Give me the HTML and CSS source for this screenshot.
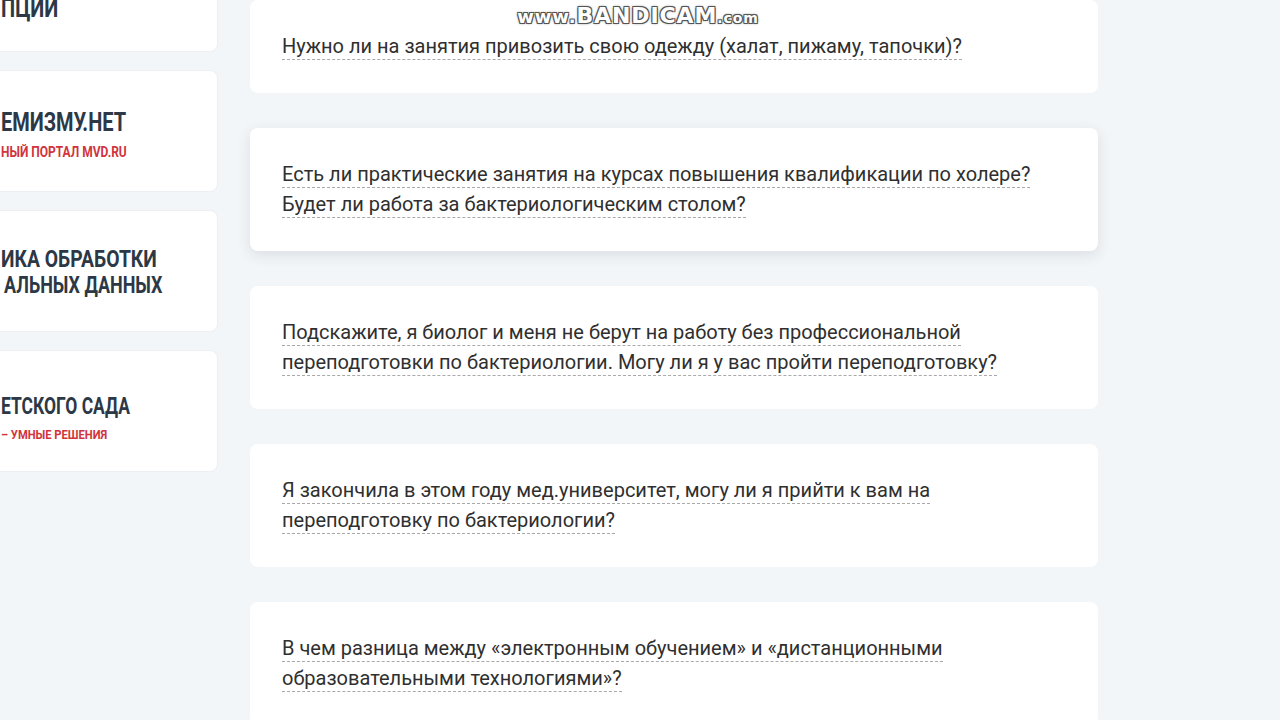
FILE: index.html
```html
<!DOCTYPE html>
<html lang="ru">
<head>
    <meta charset="UTF-8">
    <meta name="viewport" content="width=device-width, initial-scale=1.0">
    <title>Вопросы и ответы</title>
    <link rel="stylesheet" href="styles.css">
</head>
<body>
    <div class="watermark">www.<b>BANDICAM</b><small>.com</small></div>

    <div class="page">
        <aside class="sidebar">
            <a href="#" class="banner first">
                <span class="banner-title">ПЦИИ</span>
            </a>
            <a href="#" class="banner">
                <span class="banner-title">ЕМИЗМУ.НЕТ</span>
                <span class="banner-sub">НЫЙ ПОРТАЛ MVD.RU</span>
            </a>
            <a href="#" class="banner two-lines">
                <span class="banner-title">ИКА ОБРАБОТКИ</span>
                <span class="banner-title narrow">АЛЬНЫХ ДАННЫХ</span>
            </a>
            <a href="#" class="banner low">
                <span class="banner-title small">ЕТСКОГО САДА</span>
                <span class="banner-sub small">– УМНЫЕ РЕШЕНИЯ</span>
            </a>
        </aside>

        <main class="faq">
            <div class="faq-item">
                <a href="#" class="question">Нужно ли на занятия привозить свою одежду (халат, пижаму, тапочки)?</a>
            </div>
            <div class="faq-item hover">
                <a href="#" class="question">Есть ли практические занятия на курсах повышения квалификации по холере? Будет ли работа за бактериологическим столом?</a>
            </div>
            <div class="faq-item">
                <a href="#" class="question">Подскажите, я биолог и меня не берут на работу без профессиональной переподготовки по бактериологии. Могу ли я у вас пройти переподготовку?</a>
            </div>
            <div class="faq-item">
                <a href="#" class="question">Я закончила в этом году мед.университет, могу ли я прийти к вам на переподготовку по бактериологии?</a>
            </div>
            <div class="faq-item">
                <a href="#" class="question">В чем разница между «электронным обучением» и «дистанционными образовательными технологиями»?</a>
            </div>
        </main>
    </div>
</body>
</html>
```

FILE: styles.css
```css
html, body {
    margin: 0;
    height: 100%;
    overflow: hidden;
}
body {
    font-family: Roboto, "Noto Sans", Arial, sans-serif;
    background-color: #f3f6f8;
    color: #333;
}
.page {
    display: flex;
    align-items: flex-start;
    gap: 32px;
    margin-left: -32px;
}

/* левая колонка с баннерами */
.sidebar {
    width: 250px;
    display: flex;
    flex-direction: column;
    gap: 18px;
    margin-top: -70px;
}
.banner {
    height: 122px;
    box-sizing: border-box;
    background: #fff;
    border: 1px solid #edf0f3;
    border-radius: 8px;
    display: flex;
    flex-direction: column;
    justify-content: center;
    padding: 8px 0 0 32px;
    text-decoration: none;
    overflow: hidden;
}
.banner.first {
    padding-top: 36px;
}
.banner.two-lines {
    padding-top: 4px;
}
.banner.low {
    padding-top: 16px;
}
.banner-title {
    display: block;
    font-weight: 700;
    font-size: 25px;
    line-height: 26px;
    color: #2c3846;
    white-space: nowrap;
    transform: scaleX(0.8);
    transform-origin: left center;
}
.two-lines .banner-title {
    font-size: 23px;
    transform: scaleX(0.84);
}
.two-lines .banner-title.narrow {
    transform: scaleX(0.78);
    padding-left: 4px;
}
.banner-title.small {
    font-size: 23px;
    transform: scaleX(0.76);
}
.banner-sub {
    display: block;
    margin-top: 7px;
    font-weight: 700;
    font-size: 15px;
    line-height: 18px;
    color: #d1343c;
    white-space: nowrap;
    transform: scaleX(0.8);
    transform-origin: left center;
}
.banner-sub.small {
    font-size: 13px;
    margin-top: 6px;
    transform: scaleX(0.86);
}

/* вопросы */
.faq {
    width: 848px;
    display: flex;
    flex-direction: column;
    gap: 35px;
}
.faq-item {
    background: #fff;
    border-radius: 8px;
    padding: 31px 40px 32px 32px;
}
.faq-item.hover {
    box-shadow: 0 4px 14px rgba(40, 60, 80, 0.12);
}
.question {
    font-size: 20px;
    line-height: 30px;
    color: #2f2f2f;
    text-decoration: none;
    border-bottom: 1px dashed #a9a9a9;
    padding-bottom: 1px;
}

/* водяной знак записи экрана */
.watermark {
    position: absolute;
    top: 3px;
    left: 508px;
    width: 260px;
    text-align: center;
    font-family: "DejaVu Sans", sans-serif;
    font-weight: 700;
    font-size: 18px;
    letter-spacing: 0.9px;
    color: #fff;
    text-shadow: -1px -1px 0 #555, 1px -1px 0 #555, -1px 1px 0 #555, 1px 1px 0 #555, 0 0 3px #333;
    z-index: 10;
}
.watermark b {
    font-size: 22px;
}
.watermark small {
    font-size: 14px;
}
```
